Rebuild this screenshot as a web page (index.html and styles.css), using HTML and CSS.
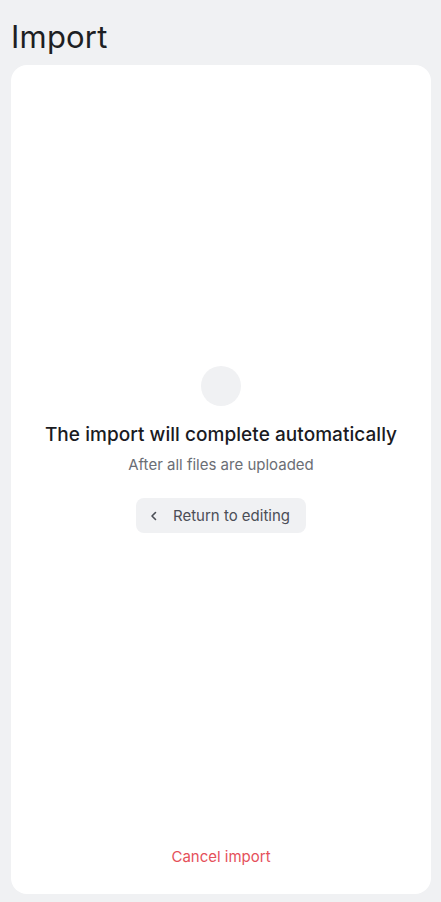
FILE: index.html
```html
<!DOCTYPE html>
<html lang="en">
<head>
<meta charset="utf-8">
<title>Import</title>
<link rel="stylesheet" href="styles.css">
</head>
<body>
<div class="page">
  <h1 class="title">Import</h1>
  <main class="card">
    <section class="center">
      <div class="spinner"></div>
      <h2 class="heading">The import will complete automatically</h2>
      <p class="sub">After all files are uploaded</p>
      <button class="back" type="button">
        <svg class="chev" width="16" height="16" viewBox="0 0 16 16" aria-hidden="true"><path d="M9.5 4.5 6 8l3.5 3.5" fill="none" stroke="currentColor" stroke-width="1.6" stroke-linecap="round" stroke-linejoin="round"/></svg>
        <span>Return to editing</span>
      </button>
    </section>
    <footer class="footer">
      <button class="cancel" type="button">Cancel import</button>
    </footer>
  </main>
</div>
</body>
</html>
```

FILE: styles.css
```css
* { box-sizing: border-box; }
html, body { margin: 0; padding: 0; }
body {
  background: #f0f1f3;
  font-family: Inter, "Noto Sans", "Liberation Sans", sans-serif;
  color: #1b1c20;
}
.page {
  height: 100vh;
  display: flex;
  flex-direction: column;
  padding: 17px 10px 8px 11px;
}
.title {
  margin: 0 0 8px;
  font-size: 31px;
  line-height: 40px;
  font-weight: 400;
  color: #1e1f23;
  letter-spacing: 0.2px;
}
.card {
  flex: 1;
  background: #fff;
  border-radius: 16px;
  display: flex;
  flex-direction: column;
}
.center {
  flex: 1;
  display: flex;
  flex-direction: column;
  align-items: center;
  justify-content: center;
}
.spinner {
  width: 40px;
  height: 40px;
  border-radius: 50%;
  background: #f0f1f3;
  margin-bottom: 16px;
}
.heading {
  margin: 0;
  font-size: 19px;
  line-height: 26px;
  font-weight: 450;
  color: #1a1b1f;
  letter-spacing: 0.05px;
}
.sub {
  margin: 7px 0 23px;
  font-size: 15px;
  line-height: 20px;
  color: #6b6e75;
}
.back {
  display: flex;
  align-items: center;
  gap: 11px;
  height: 35px;
  padding: 0 16px 0 10px;
  border: 0;
  border-radius: 8px;
  background: #f0f1f3;
  color: #4b4e56;
  font-family: inherit;
  font-size: 15px;
  cursor: pointer;
}
.chev { display: block; }
.footer {
  display: flex;
  justify-content: center;
  padding: 13px 0 27px;
}
.cancel {
  border: 0;
  background: none;
  padding: 0;
  font-family: inherit;
  font-size: 15px;
  line-height: 20px;
  color: #e5505a;
  cursor: pointer;
}
```
